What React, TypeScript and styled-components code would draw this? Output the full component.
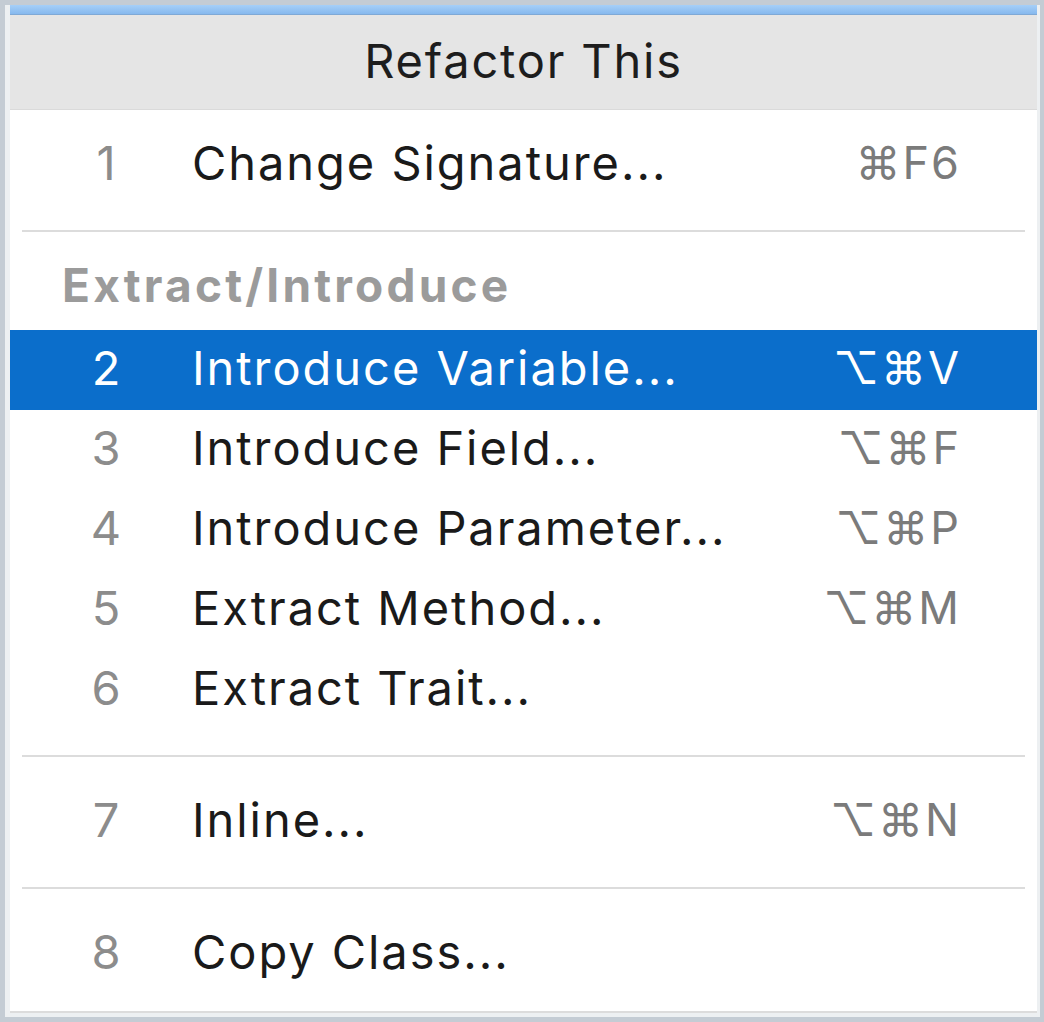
import React from "react"
import styled, { createGlobalStyle } from "styled-components"

const GlobalStyle = createGlobalStyle`
    html, body {
        margin: 0;
        padding: 0;
        background: #c4ccd4;
    }
    body {
        font-family: Inter, "Noto Sans", "DejaVu Sans", sans-serif;
    }
`

const Shell = styled.div`
    width: 1035px;
    height: 1012px;
    margin: 5px 0 0 5px;
    padding: 0 3px 4px 5px;
    box-sizing: border-box;
    background: #edf0f2;
    display: flex;
    flex-direction: column;
`

const TitleStrip = styled.div`
    height: 9px;
    background: linear-gradient(#a6cff8, #86b9ee);
    border-bottom: 1px solid #7fa9d6;
`

const Panel = styled.div`
    flex: 1;
    background: #ffffff;
    display: flex;
    flex-direction: column;
    border-bottom: 2px solid #dcdcdc;
`

const Header = styled.div`
    height: 95px;
    padding-bottom: 3px;
    box-sizing: border-box;
    background: #e5e5e5;
    border-bottom: 1px solid #dadada;
    display: flex;
    align-items: center;
    justify-content: center;
    font-size: 47px;
    letter-spacing: 1.8px;
    color: #1d1d1d;
`

const List = styled.div`
    padding-top: 15px;
    display: flex;
    flex-direction: column;
`

const Row = styled.div<{ $selected?: boolean }>`
    height: 80px;
    padding: 0 78px 5px 0;
    box-sizing: border-box;
    display: flex;
    align-items: center;
    background: ${p => (p.$selected ? "#0b6ecb" : "transparent")};
    font-size: 47px;
    letter-spacing: 1.95px;
`

const Num = styled.span<{ $selected?: boolean }>`
    width: 60px;
    margin-left: 66px;
    text-align: center;
    letter-spacing: 0;
    color: ${p => (p.$selected ? "#ffffff" : "#8c8c8c")};
`

const Label = styled.span<{ $selected?: boolean }>`
    flex: 1;
    margin-left: 56px;
    color: ${p => (p.$selected ? "#ffffff" : "#1a1a1a")};
`

const Shortcut = styled.span<{ $selected?: boolean }>`
    color: ${p => (p.$selected ? "#ffffff" : "#7b7b7b")};
    font-size: 45px;
    letter-spacing: 2px;
    margin-right: -2px;
`

const Separator = styled.div`
    height: 52px;
    display: flex;
    align-items: center;
    padding: 0 12px;

    &::after {
        content: "";
        flex: 1;
        height: 2px;
        background: #dcdcdc;
    }
`

const GroupTitle = styled.div`
    height: 73px;
    display: flex;
    align-items: center;
    padding: 0 0 18px 52px;
    box-sizing: border-box;
    font-size: 46px;
    font-weight: 700;
    letter-spacing: 3.2px;
    color: #9b9b9b;
`

type Item = { n: number; label: string; keys?: string; selected?: boolean }

function MenuRow({ item }: { item: Item }) {
    return (
        <Row $selected={item.selected}>
            <Num $selected={item.selected}>{item.n}</Num>
            <Label $selected={item.selected}>{item.label}</Label>
            {item.keys && <Shortcut $selected={item.selected}>{item.keys}</Shortcut>}
        </Row>
    )
}

const extractItems: Item[] = [
    { n: 2, label: "Introduce Variable...", keys: "⌥⌘V", selected: true },
    { n: 3, label: "Introduce Field...", keys: "⌥⌘F" },
    { n: 4, label: "Introduce Parameter...", keys: "⌥⌘P" },
    { n: 5, label: "Extract Method...", keys: "⌥⌘M" },
    { n: 6, label: "Extract Trait..." },
]

export default function App() {
    return (
        <>
            <GlobalStyle />
            <Shell>
                <TitleStrip />
                <Panel>
                    <Header>Refactor This</Header>
                    <List>
                        <MenuRow item={{ n: 1, label: "Change Signature...", keys: "⌘F6" }} />
                        <Separator />
                        <GroupTitle>Extract/Introduce</GroupTitle>
                        {extractItems.map(item => (
                            <MenuRow key={item.n} item={item} />
                        ))}
                        <Separator />
                        <MenuRow item={{ n: 7, label: "Inline...", keys: "⌥⌘N" }} />
                        <Separator />
                        <MenuRow item={{ n: 8, label: "Copy Class..." }} />
                    </List>
                </Panel>
            </Shell>
        </>
    )
}
